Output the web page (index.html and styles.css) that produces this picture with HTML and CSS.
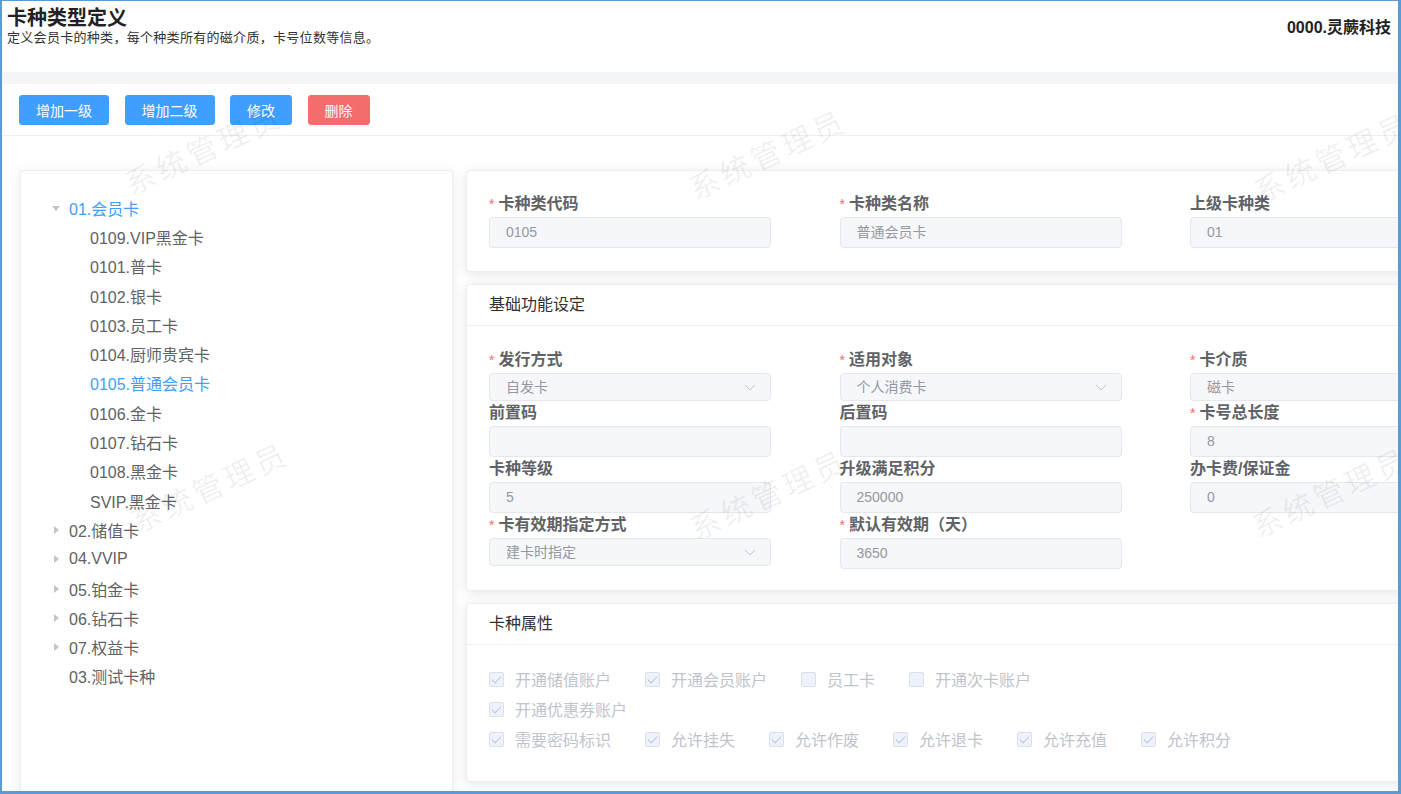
FILE: index.html
```html
<!DOCTYPE html>
<html lang="zh-CN">
<head>
<meta charset="utf-8">
<title>卡种类型定义</title>
<link rel="stylesheet" href="styles.css">
</head>
<body>
<div class="frame">
  <header class="page-head">
    <div class="titles">
      <h1 class="page-title">卡种类型定义</h1>
      <p class="page-sub">定义会员卡的种类，每个种类所有的磁介质，卡号位数等信息。</p>
    </div>
    <div class="org">0000.灵蕨科技</div>
  </header>

  <div class="toolbar">
    <button class="btn btn-primary">增加一级</button>
    <button class="btn btn-primary">增加二级</button>
    <button class="btn btn-primary">修改</button>
    <button class="btn btn-danger">删除</button>
  </div>

  <main class="main">
    <aside class="tree-card">
      <ul class="tree">
        <li class="node lvl0 active"><span class="caret caret-down"></span><span class="label">01.会员卡</span></li>
        <li class="node lvl1"><span class="caret"></span><span class="label">0109.VIP黑金卡</span></li>
        <li class="node lvl1"><span class="caret"></span><span class="label">0101.普卡</span></li>
        <li class="node lvl1"><span class="caret"></span><span class="label">0102.银卡</span></li>
        <li class="node lvl1"><span class="caret"></span><span class="label">0103.员工卡</span></li>
        <li class="node lvl1"><span class="caret"></span><span class="label">0104.厨师贵宾卡</span></li>
        <li class="node lvl1 active"><span class="caret"></span><span class="label">0105.普通会员卡</span></li>
        <li class="node lvl1"><span class="caret"></span><span class="label">0106.金卡</span></li>
        <li class="node lvl1"><span class="caret"></span><span class="label">0107.钻石卡</span></li>
        <li class="node lvl1"><span class="caret"></span><span class="label">0108.黑金卡</span></li>
        <li class="node lvl1"><span class="caret"></span><span class="label">SVIP.黑金卡</span></li>
        <li class="node lvl0"><span class="caret caret-right"></span><span class="label">02.储值卡</span></li>
        <li class="node lvl0"><span class="caret caret-right"></span><span class="label">04.VVIP</span></li>
        <li class="node lvl0"><span class="caret caret-right"></span><span class="label">05.铂金卡</span></li>
        <li class="node lvl0"><span class="caret caret-right"></span><span class="label">06.钻石卡</span></li>
        <li class="node lvl0"><span class="caret caret-right"></span><span class="label">07.权益卡</span></li>
        <li class="node lvl0"><span class="caret"></span><span class="label">03.测试卡种</span></li>
      </ul>
    </aside>

    <section class="forms">
      <div class="card">
        <div class="grid grid-top">
          <div class="field"><div class="flabel"><i class="req">*</i>卡种类代码</div><div class="input">0105</div></div>
          <div class="field"><div class="flabel"><i class="req">*</i>卡种类名称</div><div class="input">普通会员卡</div></div>
          <div class="field"><div class="flabel">上级卡种类</div><div class="input">01</div></div>
        </div>
      </div>

      <div class="card">
        <div class="card-head">基础功能设定</div>
        <div class="grid grid-basic">
          <div class="field"><div class="flabel"><i class="req">*</i>发行方式</div><div class="input select"><span>自发卡</span><svg class="chev" width="12" height="7" viewBox="0 0 12 7"><path d="M1 1l5 5 5-5" fill="none" stroke="#c0c4cc" stroke-width="1"/></svg></div></div>
          <div class="field"><div class="flabel"><i class="req">*</i>适用对象</div><div class="input select"><span>个人消费卡</span><svg class="chev" width="12" height="7" viewBox="0 0 12 7"><path d="M1 1l5 5 5-5" fill="none" stroke="#c0c4cc" stroke-width="1"/></svg></div></div>
          <div class="field"><div class="flabel"><i class="req">*</i>卡介质</div><div class="input select"><span>磁卡</span><svg class="chev" width="12" height="7" viewBox="0 0 12 7"><path d="M1 1l5 5 5-5" fill="none" stroke="#c0c4cc" stroke-width="1"/></svg></div></div>

          <div class="field"><div class="flabel">前置码</div><div class="input"></div></div>
          <div class="field"><div class="flabel">后置码</div><div class="input"></div></div>
          <div class="field"><div class="flabel"><i class="req">*</i>卡号总长度</div><div class="input">8</div></div>

          <div class="field"><div class="flabel">卡种等级</div><div class="input">5</div></div>
          <div class="field"><div class="flabel">升级满足积分</div><div class="input">250000</div></div>
          <div class="field"><div class="flabel">办卡费/保证金</div><div class="input">0</div></div>

          <div class="field"><div class="flabel"><i class="req">*</i>卡有效期指定方式</div><div class="input select"><span>建卡时指定</span><svg class="chev" width="12" height="7" viewBox="0 0 12 7"><path d="M1 1l5 5 5-5" fill="none" stroke="#c0c4cc" stroke-width="1"/></svg></div></div>
          <div class="field"><div class="flabel"><i class="req">*</i>默认有效期（天）</div><div class="input">3650</div></div>
        </div>
      </div>

      <div class="card">
        <div class="card-head">卡种属性</div>
        <div class="cb-body">
          <div class="cb-row">
            <label class="cb"><span class="box checked"></span>开通储值账户</label>
            <label class="cb"><span class="box checked"></span>开通会员账户</label>
            <label class="cb"><span class="box"></span>员工卡</label>
            <label class="cb"><span class="box"></span>开通次卡账户</label>
          </div>
          <div class="cb-row">
            <label class="cb"><span class="box checked"></span>开通优惠券账户</label>
          </div>
          <div class="cb-row">
            <label class="cb"><span class="box checked"></span>需要密码标识</label>
            <label class="cb"><span class="box checked"></span>允许挂失</label>
            <label class="cb"><span class="box checked"></span>允许作废</label>
            <label class="cb"><span class="box checked"></span>允许退卡</label>
            <label class="cb"><span class="box checked"></span>允许充值</label>
            <label class="cb"><span class="box checked"></span>允许积分</label>
          </div>
        </div>
      </div>
    </section>
  </main>

  <div class="watermarks">
    <span class="wm wm1">系统管理员</span>
    <span class="wm wm2">系统管理员</span>
    <span class="wm wm3">系统管理员</span>
    <span class="wm wm4">系统管理员</span>
    <span class="wm wm5">系统管理员</span>
    <span class="wm wm6">系统管理员</span>
  </div>
</div>
</body>
</html>
```

FILE: styles.css
```css
* { box-sizing: border-box; }

html, body {
  margin: 0;
  padding: 0;
  background: #ffffff;
}

body {
  font-family: "Liberation Sans", "Noto Sans CJK SC", sans-serif;
  color: #606266;
}

.frame {
  position: relative;
  width: 1401px;
  height: 794px;
  overflow: hidden;
  border-style: solid;
  border-color: #5b9bd5;
  border-width: 1px 3px 3px 2px;
  background: #f4f5f7;
}

/* header */
.page-head {
  display: flex;
  justify-content: space-between;
  align-items: flex-start;
  height: 71px;
  padding: 5px 7px 0 5px;
  background: #ffffff;
}

.page-title {
  margin: 0;
  font-size: 20px;
  line-height: 24px;
  font-weight: bold;
  color: #222222;
}

.page-sub {
  margin: 0;
  font-size: 13px;
  line-height: 16px;
  letter-spacing: 0.3px;
  color: #333333;
}

.org {
  margin-top: 12px;
  font-size: 16px;
  line-height: 20px;
  font-weight: bold;
  color: #222222;
}

/* toolbar */
.toolbar {
  display: flex;
  gap: 15.5px;
  margin-top: 12px;
  padding: 11px 17px 10px;
  background: #ffffff;
  border-bottom: 1px solid #ebeef5;
}

.btn {
  height: 30px;
  padding: 0 16px;
  border: 1px solid transparent;
  border-radius: 3px;
  font-family: inherit;
  font-size: 14px;
  color: #ffffff;
  cursor: pointer;
}

.btn-primary { background: #409eff; border-color: #409eff; }
.btn-danger { background: #f56c6c; border-color: #f56c6c; }

/* main */
.main {
  display: flex;
  align-items: flex-start;
  gap: 13px;
  height: 700px;
  padding: 34px 0 0 18px;
  background: #ffffff;
}

.tree-card {
  flex: 0 0 433px;
  height: 680px;
  padding: 22px 0 0 23px;
  background: #ffffff;
  border: 1px solid #ebeef5;
  border-radius: 4px;
  box-shadow: 0 2px 12px rgba(0, 0, 0, 0.09);
}

.tree {
  list-style: none;
  margin: 0;
  padding: 0;
}

.node {
  display: flex;
  align-items: center;
  height: 29.3px;
  font-size: 16px;
  color: #606266;
}

.node.lvl1 { padding-left: 21px; }
.node.active { color: #409eff; }

.caret {
  flex: 0 0 24px;
  height: 10px;
  position: relative;
  margin-right: 1px;
}

.caret-down::after,
.caret-right::after {
  content: "";
  position: absolute;
  left: 50%;
  top: 50%;
  width: 0;
  height: 0;
}

.caret-down::after {
  margin: -2px 0 0 -4px;
  border-top: 5px solid #c0c4cc;
  border-left: 4px solid transparent;
  border-right: 4px solid transparent;
}

.caret-right::after {
  margin: -4px 0 0 -2px;
  border-left: 5px solid #c0c4cc;
  border-top: 4px solid transparent;
  border-bottom: 4px solid transparent;
}

/* forms */
.forms {
  flex: 0 0 1040px;
  display: flex;
  flex-direction: column;
  gap: 12px;
}

.card {
  background: #ffffff;
  border: 1px solid #ebeef5;
  border-radius: 4px;
  box-shadow: 0 2px 12px rgba(0, 0, 0, 0.1);
}

.card-head {
  height: 41px;
  padding: 0 22px;
  line-height: 40px;
  font-size: 16px;
  color: #303133;
  border-bottom: 1px solid #ebeef5;
}

.grid {
  display: grid;
  grid-template-columns: repeat(3, 282px);
  column-gap: 68.5px;
  padding: 0 22px;
}

.grid-top { padding-top: 21px; padding-bottom: 23px; }
.grid-basic { padding-top: 22px; padding-bottom: 21px; }

.flabel {
  height: 23px;
  line-height: 23px;
  font-size: 16px;
  font-weight: bold;
  color: #606266;
  white-space: nowrap;
}

.req {
  font-style: normal;
  font-weight: normal;
  font-size: 14px;
  color: #f56c6c;
  margin-right: 4px;
}

.input {
  height: 31px;
  margin-top: 2px;
  padding: 0 16px;
  line-height: 29px;
  font-size: 14px;
  color: #96989f;
  background: #f5f7fa;
  border: 1px solid #e4e7ed;
  border-radius: 4px;
}

.select {
  height: 28px;
  line-height: 26px;
  display: flex;
  justify-content: space-between;
  align-items: center;
  padding-right: 14px;
}

.chev { display: block; }

/* checkboxes */
.cb-body {
  padding: 19px 22px 27px;
}

.cb-row {
  display: flex;
  align-items: center;
  height: 30px;
}

.cb {
  display: inline-flex;
  align-items: center;
  margin-right: 34px;
  font-size: 16px;
  color: #c0c4cc;
}

.box {
  position: relative;
  width: 15px;
  height: 15px;
  margin-right: 11px;
  background: #edf2fc;
  border: 1px solid #dcdfe6;
  border-radius: 2px;
}

.box.checked::after {
  content: "";
  position: absolute;
  left: 4px;
  top: 1px;
  width: 4px;
  height: 8px;
  border-right: 1px solid #c0c4cc;
  border-bottom: 1px solid #c0c4cc;
  transform: rotate(45deg);
}

/* watermark overlay */
.watermarks {
  position: absolute;
  inset: 0;
  pointer-events: none;
}

.wm {
  position: absolute;
  font-size: 30px;
  letter-spacing: 4px;
  color: rgba(0, 0, 0, 0.065);
  white-space: nowrap;
  transform: translate(-50%, -50%) rotate(-25deg);
}

.wm1 { left: 201px; top: 147px; }
.wm2 { left: 765px; top: 152px; }
.wm3 { left: 1330px; top: 155px; }
.wm4 { left: 207px; top: 485px; }
.wm5 { left: 766px; top: 492px; }
.wm6 { left: 1328px; top: 490px; }
```
